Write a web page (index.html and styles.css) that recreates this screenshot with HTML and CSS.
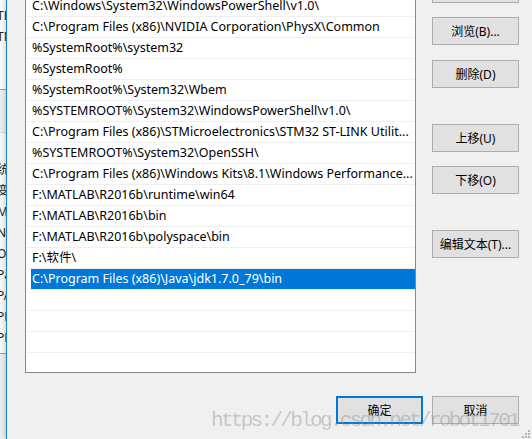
FILE: index.html
```html
<!DOCTYPE html>
<html lang="zh-CN">
<head>
    <meta charset="UTF-8">
    <title>编辑环境变量</title>
    <link rel="stylesheet" href="styles.css">
</head>
<body>

<div class="screen">
    <!-- window behind the dialog, only its right edge shows -->
    <div class="behind">
        <div class="behind-top">
            <div class="behind-line">TE</div>
            <div class="behind-line">TM</div>
        </div>
        <div class="behind-gap"></div>
        <div class="behind-list">
            <div class="behind-line">统</div>
            <div class="behind-line">变</div>
            <div class="behind-line">M</div>
            <div class="behind-line">N</div>
            <div class="behind-line">O</div>
            <div class="behind-line">Pa</div>
            <div class="behind-line">PA</div>
            <div class="behind-line">PF</div>
            <div class="behind-line">PF</div>
        </div>
        <div class="behind-gap"></div>
    </div>

    <div class="dialog">
        <div class="dialog-body">
            <div class="path-list">
                <div class="row">C:\Windows\System32\WindowsPowerShell\v1.0\</div>
                <div class="row">C:\Program Files (x86)\NVIDIA Corporation\PhysX\Common</div>
                <div class="row">%SystemRoot%\system32</div>
                <div class="row">%SystemRoot%</div>
                <div class="row">%SystemRoot%\System32\Wbem</div>
                <div class="row">%SYSTEMROOT%\System32\WindowsPowerShell\v1.0\</div>
                <div class="row">C:\Program Files (x86)\STMicroelectronics\STM32 ST-LINK Utilit...</div>
                <div class="row">%SYSTEMROOT%\System32\OpenSSH\</div>
                <div class="row">C:\Program Files (x86)\Windows Kits\8.1\Windows Performance...</div>
                <div class="row">F:\MATLAB\R2016b\runtime\win64</div>
                <div class="row">F:\MATLAB\R2016b\bin</div>
                <div class="row">F:\MATLAB\R2016b\polyspace\bin</div>
                <div class="row">F:\软件\</div>
                <div class="row is-selected">C:\Program Files (x86)\Java\jdk1.7.0_79\bin</div>
                <div class="row"></div>
                <div class="row"></div>
                <div class="row"></div>
                <div class="row"></div>
            </div>

            <div class="side-buttons">
                <button class="btn btn-edit">编辑(E)</button>
                <button class="btn btn-browse">浏览(B)...</button>
                <button class="btn btn-delete">删除(D)</button>
                <button class="btn btn-up">上移(U)</button>
                <button class="btn btn-down">下移(O)</button>
                <button class="btn btn-text">编辑文本(T)...</button>
            </div>
        </div>

        <div class="dialog-footer">
            <button class="btn btn-default">确定</button>
            <button class="btn">取消</button>
        </div>

        <div class="watermark">https://blog.csdn.net/robot1701</div>

        <svg class="grip" width="10" height="10" viewBox="0 0 10 10">
            <rect x="7" y="1" width="2" height="2"/>
            <rect x="4" y="4" width="2" height="2"/>
            <rect x="7" y="4" width="2" height="2"/>
            <rect x="1" y="7" width="2" height="2"/>
            <rect x="4" y="7" width="2" height="2"/>
            <rect x="7" y="7" width="2" height="2"/>
        </svg>
    </div>
</div>

</body>
</html>
```

FILE: styles.css
```css
html, body {
    margin: 0;
    padding: 0;
}

body {
    font-family: "Noto Sans", "Noto Sans CJK SC", sans-serif;
    font-size: 12px;
    color: #000;
    background-color: #f0f0f0;
}

.screen {
    display: flex;
    width: 532px;
    height: 439px;
    overflow: hidden;
}

/* window behind */
.behind {
    width: 6px;
    flex-shrink: 0;
    display: flex;
    flex-direction: column;
    overflow: hidden;
    background-color: #e9e9e9;
}
.behind-top {
    height: 90px;
    padding-top: 5px;
    box-sizing: border-box;
    background-color: #fafafa;
    border-bottom: 1px solid #a0a0a0;
}
.behind-gap {
    height: 42px;
    background-color: #ececec;
}
.behind-list {
    height: 222px;
    padding-top: 26px;
    box-sizing: border-box;
    background-color: #f7f7f7;
    border-top: 1px solid #d5d5d5;
    border-bottom: 1px solid #a0a0a0;
}
.behind-list + .behind-gap {
    flex: 1;
}
.behind-line {
    height: 21px;
    line-height: 21px;
    white-space: nowrap;
    text-indent: -3px;
    color: #222;
}

/* dialog */
.dialog {
    flex: 1;
    position: relative;
    display: flex;
    flex-direction: column;
    border-left: 1px solid #1883d7;
    background-color: #f0f0f0;
    box-shadow: -2px 0 3px rgba(0,0,0,0.12);
}

.dialog-body {
    display: flex;
    align-items: flex-start;
    padding-left: 18px;
}

.path-list {
    width: 391px;
    height: 378px;
    margin-top: -5px;
    box-sizing: border-box;
    padding-left: 1px;
    border: 1px solid #828790;
    background-color: #fff;
    overflow: hidden;
}

.row {
    height: 20px;
    line-height: 20px;
    padding: 0 2px 0 5px;
    font-size: 12.5px;
    border-bottom: 1px solid #f0f0f0;
    white-space: nowrap;
    overflow: hidden;
}
.row.is-selected {
    background: linear-gradient(to right, transparent 4px, #0078d7 4px);
    color: #fff;
}

.side-buttons {
    display: flex;
    flex-direction: column;
    margin-left: 16px;
}

.btn {
    width: 87px;
    height: 28px;
    padding: 0;
    box-sizing: border-box;
    font-family: inherit;
    font-size: 12px;
    color: #000;
    background-color: #e1e1e1;
    border: 1px solid #adadad;
    border-radius: 0;
}
.btn-edit { margin-top: -25px; }
.btn-browse { margin-top: 14px; }
.btn-delete { margin-top: 15px; }
.btn-up { margin-top: 36px; }
.btn-down { margin-top: 14px; }
.btn-text { margin-top: 36px; }

.dialog-footer {
    display: flex;
    justify-content: flex-end;
    gap: 9px;
    margin-top: 23px;
    padding-right: 13px;
}
.btn-default {
    border: 2px solid #0078d7;
}

.watermark {
    position: absolute;
    left: 204px;
    top: 410px;
    font-family: "Liberation Mono", monospace;
    font-size: 21px;
    line-height: 21px;
    letter-spacing: -2.7px;
    color: rgba(140, 140, 140, 0.42);
    white-space: nowrap;
    pointer-events: none;
}

.grip {
    position: absolute;
    right: 1px;
    bottom: 0;
    fill: #b4b4b4;
}
```
